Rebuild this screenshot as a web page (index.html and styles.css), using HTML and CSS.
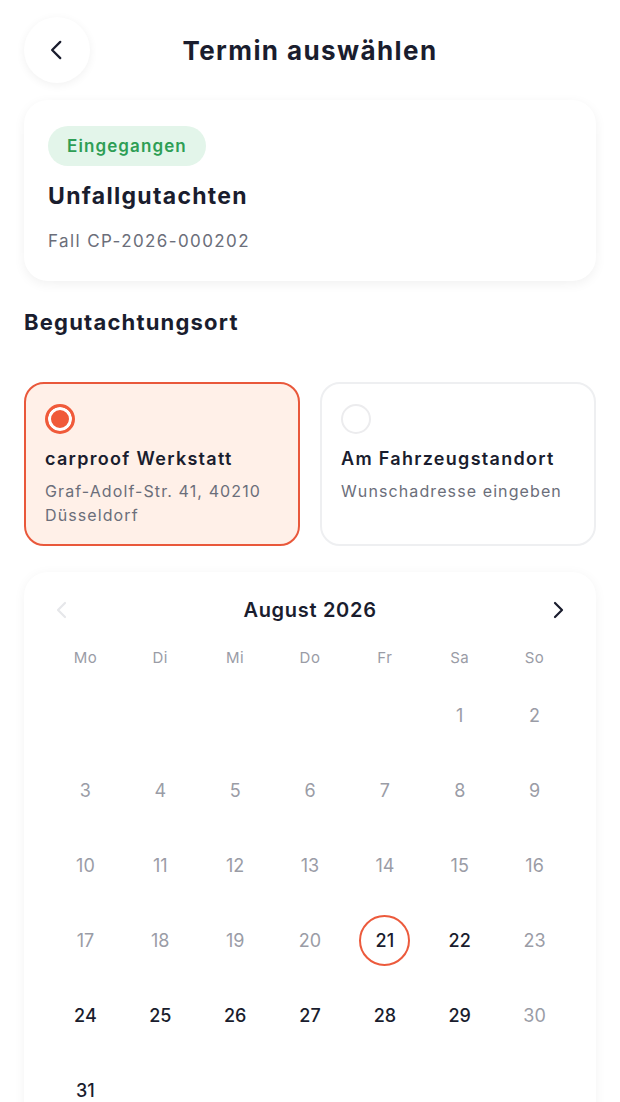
FILE: index.html
```html
<!DOCTYPE html>
<html lang="de">
<head>
<meta charset="utf-8">
<link rel="stylesheet" href="styles.css">
</head>
<body>
<div class="page">
  <header class="topbar">
    <button class="back">
      <svg width="26" height="26" viewBox="0 0 24 24"><path d="M15 4.5l-7.5 7.5 7.5 7.5" fill="none" stroke="#1a1d2e" stroke-width="2.1" stroke-linecap="round" stroke-linejoin="round"/></svg>
    </button>
    <h1 class="title">Termin auswählen</h1>
  </header>

  <section class="case-card">
    <span class="badge">Eingegangen</span>
    <h2 class="case-title">Unfallgutachten</h2>
    <p class="case-id">Fall CP-2026-000202</p>
  </section>

  <h3 class="section-title">Begutachtungsort</h3>

  <div class="options">
    <div class="option selected">
      <span class="radio on"></span>
      <div class="opt-title">carproof Werkstatt</div>
      <div class="opt-sub">Graf-Adolf-Str. 41, 40210 Düsseldorf</div>
    </div>
    <div class="option">
      <span class="radio"></span>
      <div class="opt-title">Am Fahrzeugstandort</div>
      <div class="opt-sub">Wunschadresse eingeben</div>
    </div>
  </div>

  <section class="calendar">
    <div class="cal-head">
      <svg class="nav" width="24" height="24" viewBox="0 0 24 24"><path d="M15 5l-7 7 7 7" fill="none" stroke="#e6e7ea" stroke-width="2.2" stroke-linecap="round" stroke-linejoin="round"/></svg>
      <div class="month">August 2026</div>
      <svg class="nav" width="24" height="24" viewBox="0 0 24 24"><path d="M9 5l7 7-7 7" fill="none" stroke="#1a1d2e" stroke-width="2.2" stroke-linecap="round" stroke-linejoin="round"/></svg>
    </div>
    <div class="grid weekdays">
      <div>Mo</div><div>Di</div><div>Mi</div><div>Do</div><div>Fr</div><div>Sa</div><div>So</div>
    </div>
    <div class="grid days">
      <div></div><div></div><div></div><div></div><div></div>
      <div class="d off">1</div><div class="d off">2</div>
      <div class="d off">3</div><div class="d off">4</div><div class="d off">5</div><div class="d off">6</div><div class="d off">7</div><div class="d off">8</div><div class="d off">9</div>
      <div class="d off">10</div><div class="d off">11</div><div class="d off">12</div><div class="d off">13</div><div class="d off">14</div><div class="d off">15</div><div class="d off">16</div>
      <div class="d off">17</div><div class="d off">18</div><div class="d off">19</div><div class="d off">20</div><div class="d sel"><span>21</span></div><div class="d">22</div><div class="d off">23</div>
      <div class="d">24</div><div class="d">25</div><div class="d">26</div><div class="d">27</div><div class="d">28</div><div class="d">29</div><div class="d off">30</div>
      <div class="d">31</div>
    </div>
  </section>
</div>
</body>
</html>
```

FILE: styles.css
```css
* { box-sizing: border-box; }
html, body { margin: 0; padding: 0; background: #ffffff; }
body {
  font-family: "Inter", "Noto Sans", sans-serif;
  color: #1a1d2e;
  overflow: hidden;
}
.page { padding: 17px 24px 0; }

.topbar {
  position: relative;
  height: 66px;
  display: flex;
  align-items: center;
  justify-content: center;
}
.back {
  position: absolute;
  left: 0;
  top: 0;
  width: 66px;
  height: 66px;
  border-radius: 50%;
  border: none;
  background: #fff;
  box-shadow: 0 2px 10px rgba(0,0,0,0.06);
  display: flex;
  align-items: center;
  justify-content: center;
  padding: 0;
}
.title {
  margin: 0;
  font-size: 26px;
  font-weight: 700;
  letter-spacing: 1.4px;
}

.case-card {
  margin-top: 17px;
  background: #fff;
  border-radius: 24px;
  box-shadow: 0 3px 12px rgba(0,0,0,0.06);
  padding: 26px 24px 28px;
}
.badge {
  display: inline-block;
  background: #e3f5ea;
  color: #2e9e55;
  font-size: 17px;
  font-weight: 600;
  letter-spacing: 1.1px;
  height: 40px;
  line-height: 40px;
  padding: 0 19px;
  border-radius: 20px;
}
.case-title {
  margin: 14px 0 0;
  font-size: 23px;
  font-weight: 700;
  letter-spacing: 1.3px;
  line-height: 32px;
}
.case-id {
  margin: 17px 0 0;
  font-size: 17px;
  color: #6b6e7a;
  letter-spacing: 1.4px;
  line-height: 24px;
}

.section-title {
  margin: 26px 0 0;
  font-size: 22px;
  font-weight: 700;
  letter-spacing: 1.2px;
  line-height: 30px;
}

.options {
  margin-top: 45px;
  display: grid;
  grid-template-columns: 1fr 1fr;
  gap: 20px;
}
.option {
  height: 164px;
  border: 2px solid #eeeff1;
  border-radius: 20px;
  padding: 20px 19px;
  background: #fff;
}
.option.selected {
  border-color: #e9583b;
  background: #fff0e8;
}
.radio {
  display: block;
  width: 30px;
  height: 30px;
  border-radius: 50%;
  border: 2px solid #ececee;
  background: #fff;
}
.radio.on {
  border: 3px solid #f05a3a;
  background: #f05a3a;
  box-shadow: inset 0 0 0 3px #fff;
}
.opt-title {
  margin-top: 12px;
  font-size: 18px;
  font-weight: 600;
  letter-spacing: 1.3px;
  line-height: 26px;
}
.opt-sub {
  margin-top: 7px;
  font-size: 16px;
  line-height: 24px;
  letter-spacing: 1.1px;
  color: #6b6e7a;
}

.calendar {
  margin-top: 26px;
  background: #fff;
  border-radius: 24px 24px 0 0;
  box-shadow: 0 2px 12px rgba(0,0,0,0.05);
  padding: 20px 24px 0;
  height: 560px;
}
.cal-head {
  display: flex;
  align-items: center;
  justify-content: space-between;
  padding: 0 2px;
  height: 36px;
}
.month {
  font-size: 20px;
  font-weight: 600;
  letter-spacing: 0.7px;
}
.grid {
  display: grid;
  grid-template-columns: repeat(7, 1fr);
  text-align: center;
}
.weekdays {
  margin-top: 19px;
  font-size: 15px;
  color: #9a9ca6;
  letter-spacing: 0.5px;
  line-height: 22px;
}
.days { margin-top: 9px; }
.d {
  height: 75px;
  display: flex;
  align-items: center;
  justify-content: center;
  font-size: 18px;
  font-weight: 500;
  color: #1a1d2e;
}
.d.off { color: #9a9ca6; font-weight: 400; }
.d.sel span {
  width: 51px;
  height: 51px;
  border-radius: 50%;
  border: 2px solid #ec5a3c;
  display: flex;
  align-items: center;
  justify-content: center;
}
```
